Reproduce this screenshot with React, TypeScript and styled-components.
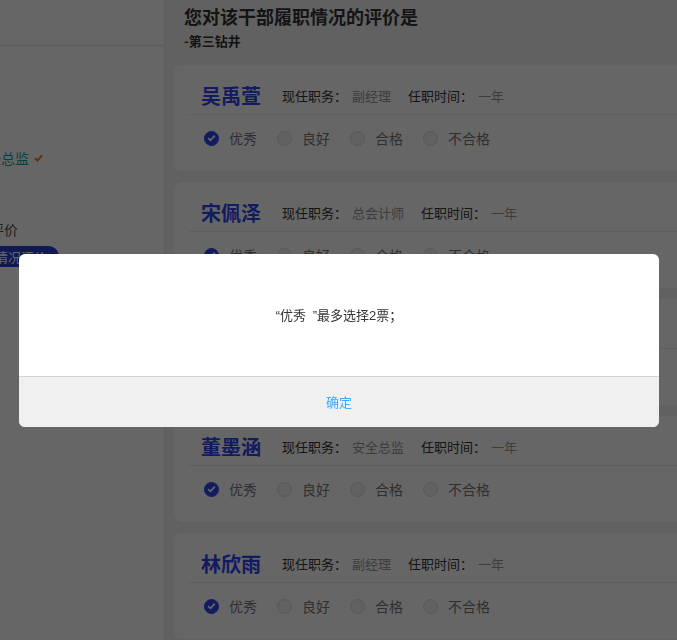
import React from "react";
import styled, { createGlobalStyle } from "styled-components";

const GlobalStyle = createGlobalStyle`
  html, body { margin: 0; padding: 0; }
  body {
    font-family: "Noto Sans CJK SC", "Noto Sans", sans-serif;
    color: #333;
    overflow: hidden;
  }
  * { box-sizing: border-box; }
`;

const Page = styled.div`
  display: flex;
  width: 677px;
  height: 640px;
  overflow: hidden;
  background: #f2f2f2;
`;

const Sidebar = styled.aside`
  flex: 0 0 165px;
  height: 100%;
  background: #fff;
  border-right: 1px solid #e4e4e4;
  overflow: hidden;
`;

const SidebarHeader = styled.div`
  height: 46px;
  border-bottom: 1px solid #e6e6e6;
`;

const Drawer = styled.div`
  display: flex;
  flex-direction: column;
  align-items: flex-start;
  margin-left: -97px;
  padding-top: 101px;
  white-space: nowrap;
`;

const DutyRow = styled.div`
  display: flex;
  align-items: center;
  gap: 5px;
  height: 22px;
  font-size: 14px;
  color: #22a3a3;
`;

const SectionLabel = styled.div`
  margin-top: 49px;
  padding-left: 3px;
  height: 22px;
  line-height: 22px;
  font-size: 14px;
  color: #555;
`;

const Pill = styled.div`
  margin-top: 6px;
  margin-left: 28px;
  height: 21px;
  line-height: 21px;
  padding: 0 12px;
  border-radius: 11px;
  background: #2a3ed8;
  color: #fff;
  font-size: 13px;
`;

const Main = styled.main`
  flex: 1;
  min-width: 0;
  height: 100%;
  padding-left: 9px;
  overflow: hidden;
`;

const TitleBlock = styled.header`
  padding: 4px 0 0 10px;
  white-space: nowrap;
`;

const Title = styled.h1`
  margin: 0;
  font-size: 18px;
  line-height: 24px;
  font-weight: 700;
  color: #333;
`;

const SubTitle = styled.div`
  margin-top: 4px;
  font-size: 13px;
  line-height: 18px;
  font-weight: 700;
  color: #333;
`;

const CardList = styled.div`
  display: flex;
  flex-direction: column;
  gap: 11px;
  margin-top: 15px;
`;

const Card = styled.section`
  width: 530px;
  height: 106px;
  background: #fff;
  border-radius: 8px;
  padding-left: 15px;
`;

const CardHead = styled.div`
  display: flex;
  align-items: center;
  height: 50px;
  padding: 12px 0 0 12px;
  border-bottom: 1px solid #ececec;
  white-space: nowrap;
`;

const Name = styled.div`
  font-size: 20px;
  line-height: 28px;
  font-weight: 700;
  color: #2f45f0;
  margin-right: 21px;
`;

const InfoLabel = styled.span`
  font-size: 13px;
  color: #333;
  margin-right: 5px;
`;

const InfoValue = styled.span`
  font-size: 13px;
  color: #999;
  margin-right: 17px;
`;

const Options = styled.div`
  display: flex;
  align-items: center;
  height: 46px;
  padding-left: 15px;
`;

const Option = styled.label`
  display: flex;
  align-items: center;
  gap: 10px;
  margin-right: 20px;
  font-size: 14px;
  color: #777;
`;

const Radio = styled.span<{ $checked?: boolean }>`
  display: inline-flex;
  align-items: center;
  justify-content: center;
  width: 15px;
  height: 15px;
  border-radius: 50%;
  background: ${(p) => (p.$checked ? "#2f45f0" : "#f2f2f2")};
  border: 1px solid ${(p) => (p.$checked ? "#2f45f0" : "#dcdcdc")};
`;

const Overlay = styled.div`
  position: fixed;
  inset: 0;
  background: rgba(0, 0, 0, 0.6);
  z-index: 10;
`;

const Dialog = styled.div`
  position: fixed;
  left: 19px;
  top: 254px;
  width: 640px;
  background: #fff;
  border-radius: 6px;
  overflow: hidden;
  z-index: 11;
`;

const DialogBody = styled.div`
  display: flex;
  align-items: center;
  justify-content: center;
  height: 122px;
  padding-bottom: 2px;
  font-family: "Liberation Sans", "Noto Sans CJK SC", sans-serif;
  font-size: 13px;
  word-spacing: 3px;
  color: #333;
`;

const DialogFooter = styled.button`
  display: flex;
  align-items: center;
  justify-content: center;
  width: 100%;
  height: 51px;
  border: 0;
  border-top: 1px solid #d4d4d4;
  background: #f0f0f0;
  color: #3da8f5;
  font-family: "Noto Sans CJK SC", sans-serif;
  font-size: 13px;
  padding: 0 0 2px;
`;

const Check = () => (
  <svg width="9" height="8" viewBox="0 0 9 8">
    <path d="M1 4.2 L3.6 6.6 L8 1.4" fill="none" stroke="#f07a1a" strokeWidth="2" />
  </svg>
);

const Tick = () => (
  <svg width="9" height="8" viewBox="0 0 9 8">
    <path d="M1.2 4.2 L3.5 6.3 L7.8 1.6" fill="none" stroke="#fff" strokeWidth="1.8" />
  </svg>
);

type Person = { name: string; duty: string; years: string };

const people: Person[] = [
  { name: "吴禹萱", duty: "副经理", years: "一年" },
  { name: "宋佩泽", duty: "总会计师", years: "一年" },
  { name: "周子航", duty: "副经理", years: "一年" },
  { name: "董墨涵", duty: "安全总监", years: "一年" },
  { name: "林欣雨", duty: "副经理", years: "一年" },
];

const grades = ["优秀", "良好", "合格", "不合格"];

export default function App() {
  return (
    <>
      <GlobalStyle />
      <Page>
        <Sidebar>
          <SidebarHeader />
          <Drawer>
            <DutyRow>
              现任职务：安全总监
              <Check />
            </DutyRow>
            <SectionLabel>履职情况综合评价</SectionLabel>
            <Pill>查看履职情况评价</Pill>
          </Drawer>
        </Sidebar>
        <Main>
          <TitleBlock>
            <Title>您对该干部履职情况的评价是</Title>
            <SubTitle>-第三钻井</SubTitle>
          </TitleBlock>
          <CardList>
            {people.map((p) => (
              <Card key={p.name}>
                <CardHead>
                  <Name>{p.name}</Name>
                  <InfoLabel>现任职务：</InfoLabel>
                  <InfoValue>{p.duty}</InfoValue>
                  <InfoLabel>任职时间：</InfoLabel>
                  <InfoValue>{p.years}</InfoValue>
                </CardHead>
                <Options>
                  {grades.map((g, i) => (
                    <Option key={g}>
                      <Radio $checked={i === 0}>{i === 0 && <Tick />}</Radio>
                      {g}
                    </Option>
                  ))}
                </Options>
              </Card>
            ))}
          </CardList>
        </Main>
      </Page>
      <Overlay />
      <Dialog>
        <DialogBody>“优秀 ”最多选择2票；</DialogBody>
        <DialogFooter>确定</DialogFooter>
      </Dialog>
    </>
  );
}
